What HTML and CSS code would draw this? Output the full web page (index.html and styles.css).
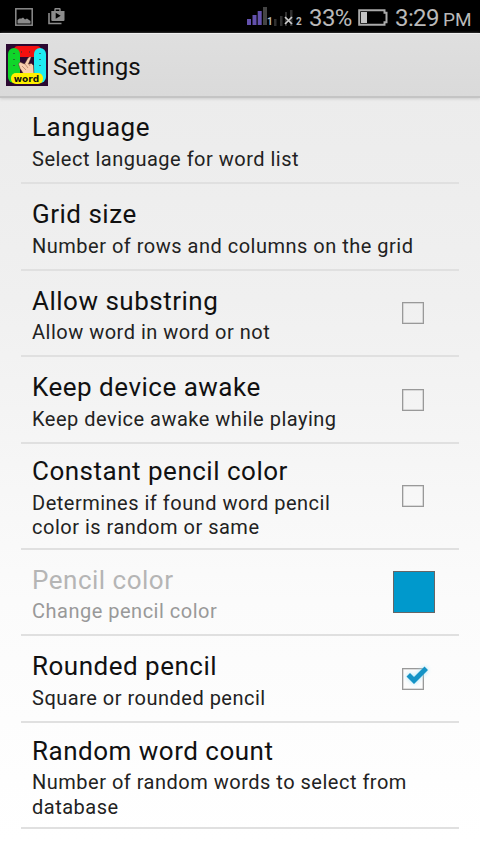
FILE: index.html
```html
<!DOCTYPE html>
<html lang="en">
<head>
<meta charset="utf-8">
<title>Settings</title>
<link rel="stylesheet" href="styles.css">
</head>
<body>
<div class="statusbar">
  <svg class="picture" width="18" height="18" viewBox="0 0 18 18"><rect x=".8" y=".8" width="16.4" height="16.4" fill="none" stroke="#8c8c8c" stroke-width="1.500"/><path d="M2.500 15.500V12l2-1.500h2L8 9.500l2 2 2-1 2 1.500 1.500 1v2.500z" fill="#8c8c8c"/></svg>
  <svg class="store" width="17" height="17" viewBox="0 0 17 17"><path d="M1 5v10.500h12.500" fill="none" stroke="#8c8c8c" stroke-width="1.600"/><path fill-rule="evenodd" d="M3.300 3h3V1.200Q6.300 0 7.500 0h4Q12.700 0 12.700 1.200V3h3.800v9q0 1-1 1H4.300q-1 0-1-1zM7.700 3h3.600V1.400H7.700zM7.700 4.800v6l5-3z" fill="#8c8c8c"/></svg>
  <span class="grow"></span>
  <svg class="signal" width="20" height="19" viewBox="0 0 20 19"><g fill="#6351ad"><rect y="12" width="4" height="6"/><rect x="5.500" y="8" width="4" height="10"/><rect x="10.700" y="4" width="4" height="14"/></g><rect x="16" width="4" height="18" fill="#444"/></svg>
  <span class="sim sim1">1</span>
  <svg class="nosignal" width="20" height="19" viewBox="0 0 20 19"><g fill="#303030"><rect y="11" width="2.500" height="7"/><rect x="6" y="8" width="2.500" height="10"/><rect x="11" y="4" width="2" height="14"/><rect x="16" y="2" width="2.500" height="16"/></g><path d="M11 9l7 7m0-7l-7 7" stroke="#ccc" stroke-width="1.700"/></svg>
  <span class="sim sim2">2</span>
  <span class="percent">33%</span>
  <svg class="battery" width="30" height="17" viewBox="0 0 30 17"><path d="M1.200 1.200h25.300v2.500h2v9.600h-2v2.500H1.200z" fill="none" stroke="#aaa" stroke-width="2"/><rect x="3" y="3" width="6" height="11" fill="#c4c4c4"/></svg>
  <span class="time">3:29</span><span class="pm">PM</span>
</div>
<header class="actionbar">
  <svg class="logo" width="42" height="42" viewBox="0 0 42 42">
    <rect width="42" height="42" fill="#2b0931"/>
    <rect x="8" y="2" width="27" height="11" rx="4" fill="#f40f0f"/>
    <rect x="2" y="4" width="12" height="35" rx="6" fill="#10d52a"/>
    <rect x="28" y="4" width="12" height="35" rx="6" fill="#1eeaf0"/>
    <g fill="#333" opacity=".6"><path d="M7 9h2v1H7zm0 6h2v1H7zm0 6h2v1H7zm26-12h2v1h-2zm0 6h2v1h-2zm0 6h2v1h-2zM15 7h1v2h-1zm8 0h1v2h-1z"/></g>
    <path d="M12.500 20l1.500-2 4.500 2 3.500-6 2-1.500 1 1-2.500 6.500 3-.5 2 2 .5 9H18l-4-6z" fill="#f8cdae" stroke="#52301f" stroke-width=".5"/>
    <path d="M16 22l4 4m-1-6l3 4m0-5l2 3" stroke="#8a573d" stroke-width=".5"/>
    <rect x="5" y="29" width="32" height="11" rx="5" fill="#fff000"/>
    <text x="20.500" y="37.500" text-anchor="middle" class="logotext">word</text>
  </svg>
  <h1>Settings</h1>
</header>
<main class="list">
  <section class="row"><div class="text"><h2>Language</h2><p>Select language for word list</p></div></section>
  <section class="row"><div class="text"><h2>Grid size</h2><p>Number of rows and columns on the grid</p></div></section>
  <section class="row"><div class="text"><h2>Allow substring</h2><p>Allow word in word or not</p></div><span class="check"></span></section>
  <section class="row"><div class="text"><h2>Keep device awake</h2><p>Keep device awake while playing</p></div><span class="check"></span></section>
  <section class="row tall"><div class="text"><h2>Constant pencil color</h2><p>Determines if found word pencil<br>color is random or same</p></div><span class="check"></span></section>
  <section class="row disabled"><div class="text"><h2>Pencil color</h2><p>Change pencil color</p></div><span class="swatch"></span></section>
  <section class="row"><div class="text"><h2>Rounded pencil</h2><p>Square or rounded pencil</p></div><span class="check"><svg class="tick" width="26" height="22" viewBox="0 0 26 22"><path d="M2.500 11.500l3.500-3.500 4 4L20.500 1.500l3.500 3.500L10 19z" fill="#1593c6"/></svg></span></section>
  <section class="row tall"><div class="text"><h2>Random word count</h2><p>Number of random words to select from<br>database</p></div></section>
</main>
</body>
</html>
```
FILE: styles.css
```css
* { box-sizing: border-box; }
html { height: 100%; }
body {
  margin: 0;
  height: 853px;
  overflow: hidden;
  font-family: Roboto, sans-serif;
  color: #111;
  background: linear-gradient(#ececec 97px, #f0f0f0 300px, #fbfbfb 600px, #fff 840px);
}
h1, h2, p { margin: 0; font-weight: 400; white-space: nowrap; }
.statusbar {
  height: 33px;
  background: #000;
  color: #b9b9b9;
  display: flex;
  align-items: center;
  padding: 2px 9px 0 15px;
}
.picture, .store { margin-top: -2px; }
.store { margin-left: 15px; }
.grow { flex: 1; }
.signal { margin-top: -2px; }
.sim { font-size: 10px; font-weight: 700; line-height: 10px; margin-top: 9px; width: 6px; }
.nosignal { margin-left: 1px; }
.sim2 { margin-left: 2px; width: 7px; }
.percent { font-size: 24px; width: 43px; margin-left: 6px; letter-spacing: -.6px; }
.battery { margin-left: 6px; }
.time { font-size: 24px; width: 42px; margin-left: 7px; letter-spacing: -.6px; }
.pm { font-size: 19px; margin-left: 6px; width: 28px; margin-top: 3px; }
.actionbar {
  height: 65px;
  background: linear-gradient(#dfdfdf, #dadada);
  border-top: 1px solid #f0f0f0;
  border-bottom: 2px solid #c4c4c4;
  box-shadow: 0 1px 3px #ccc;
  display: flex;
  align-items: center;
  padding: 0 0 0 6px;
}
.logotext { font: 700 9px "DejaVu Sans", sans-serif; fill: #111; }
h1 { font-size: 24px; margin: 3px 0 0 5px; letter-spacing: 0; }
.list { padding: 0 21px; margin-top: -.5px; }
.row {
  height: 86.6px;
  border-bottom: 2px solid #e0e0e0;
  display: flex;
  align-items: center;
  padding: 4.4px 24px 0 11px;
}
.tall { height: 106px; }
.text { flex: 1; }
h2 { font-size: 26px; line-height: 31px; margin-bottom: 3.5px; letter-spacing: .5px; }
p { font-size: 20px; line-height: 24.5px; letter-spacing: .5px; color: #222; }
.disabled h2 { color: #b5b5b5; }
.disabled p { color: #999; }
.check {
  position: relative;
  width: 22px;
  height: 22px;
  margin: -4px 11px 0 0;
  border: 1.5px solid #999;
  box-shadow: inset 0 0 0 .5px #bbb;
}
.tick { position: absolute; left: 1px; top: -4px; filter: drop-shadow(0 0 2px #a5e5fa); }
.swatch { width: 42px; height: 42px; margin-top: -4px; background: #0099cc; border: 1px solid #666; }
```
